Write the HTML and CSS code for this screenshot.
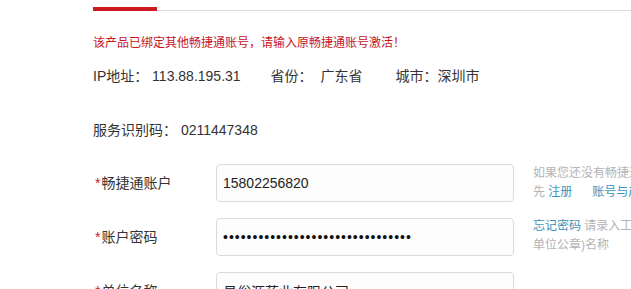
FILE: index.html
```html
<!DOCTYPE html>
<html lang="zh-CN">
<head>
<meta charset="utf-8">
<title>账号激活</title>
<link rel="stylesheet" href="styles.css">
</head>
<body>
<div class="page">
  <div class="tabs"><div class="tab-active"></div></div>
  <p class="warn">该产品已绑定其他畅捷通账号，请输入原畅捷通账号激活！</p>
  <div class="info">
    <span class="info-item">IP地址： 113.88.195.31</span>
    <span class="info-item">省份：&nbsp; 广东省</span>
    <span class="info-item city">城市：深圳市</span>
  </div>
  <div class="info code">服务识别码： 0211447348</div>

  <div class="form-row">
    <label class="label"><span class="req">*</span>畅捷通账户</label>
    <input class="field" type="text" value="15802256820" readonly>
    <div class="hint">
      <div class="hint-line">如果您还没有畅捷通账号，请</div>
      <div class="hint-line">先 <a class="link">注册</a><a class="link link-gap">账号与产品绑定</a></div>
    </div>
  </div>

  <div class="form-row">
    <label class="label"><span class="req">*</span>账户密码</label>
    <input class="field pwd" type="password" value="abcdefghijklmnopqrstuvwxyz123456" readonly>
    <div class="hint hint-2">
      <div class="hint-line"><a class="link">忘记密码</a> 请录入工商营业执照（或</div>
      <div class="hint-line">单位公章)名称</div>
    </div>
  </div>

  <div class="form-row">
    <label class="label"><span class="req">*</span>单位名称</label>
    <input class="field" type="text" value="易俗源药业有限公司" readonly>
  </div>
</div>
</body>
</html>
```

FILE: styles.css
```css
html, body {
  margin: 0;
  padding: 0;
  background: #ffffff;
  overflow: hidden;
}

.page {
  padding-left: 93px;
  font-family: "Liberation Sans", "Noto Sans CJK SC", sans-serif;
  color: #333333;
  font-size: 14px;
}

.tabs {
  height: 10px;
  border-bottom: 1px solid #dcdcdc;
}

.tab-active {
  width: 64px;
  height: 11px;
  box-sizing: border-box;
  border-bottom: 4px solid #cc1a1f;
}

.warn {
  margin: 22px 0 0;
  font-size: 12px;
  line-height: 20px;
  color: #c8161d;
  white-space: nowrap;
}

.info {
  margin-top: 13px;
  line-height: 20px;
  white-space: nowrap;
  display: flex;
  gap: 30px;
}

.info .city {
  margin-left: 3px;
}

.info.code {
  margin-top: 34px;
}

.form-row {
  display: flex;
  align-items: flex-start;
  margin-top: 16px;
  white-space: nowrap;
}

.info.code + .form-row {
  margin-top: 24px;
}

.label {
  flex: none;
  width: 123px;
  height: 38px;
  line-height: 38px;
  padding-left: 2px;
  box-sizing: border-box;
  font-size: 14px;
  color: #333333;
}

.req {
  color: #c0242a;
  margin-right: 1px;
}

.field {
  flex: none;
  width: 298px;
  height: 38px;
  box-sizing: border-box;
  border: 1px solid #dadada;
  border-radius: 4px;
  background: #fdfdfd;
  padding: 0 6px;
  margin: 0;
  font-family: "Liberation Sans", "Noto Sans CJK SC", sans-serif;
  font-size: 14px;
  color: #222222;
  outline: none;
}

.pwd {
  letter-spacing: 1px;
  color: #111111;
}

.hint {
  flex: none;
  margin-left: 19px;
  font-size: 12px;
  line-height: 18.5px;
  color: #b4b4b4;
}

.hint-2 {
  margin-top: -1px;
}

.link {
  color: #3a94bd;
  text-decoration: none;
}

.link-gap {
  margin-left: 20px;
}
```
